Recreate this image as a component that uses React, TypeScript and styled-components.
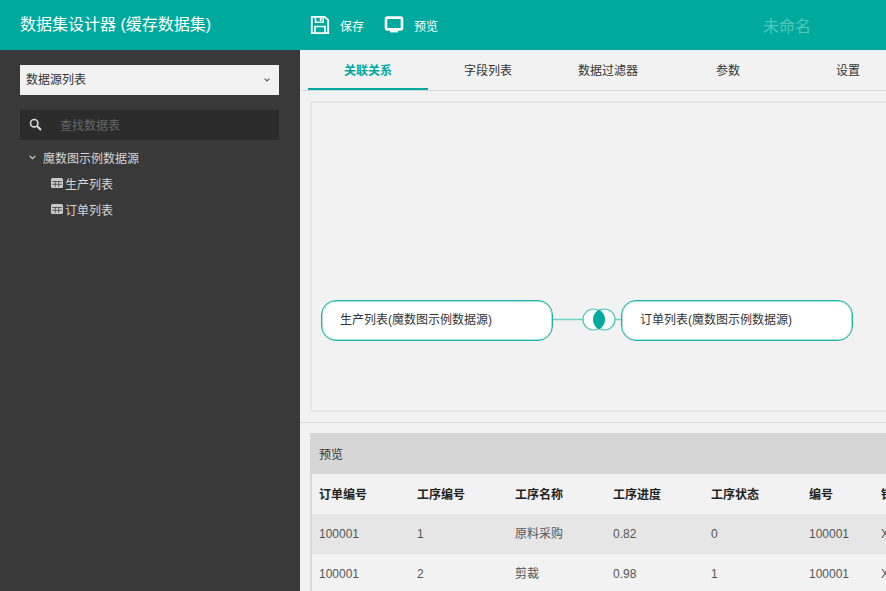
import React from "react";
import styled, { createGlobalStyle } from "styled-components";

const FONT = `"Liberation Sans", "Noto Sans CJK SC", sans-serif`;
const TEAL = "#00a99d";

const Global = createGlobalStyle`
  html, body { margin: 0; padding: 0; height: 100%; overflow: hidden; }
  body { font-family: ${FONT}; font-size: 12px; background: #f2f2f2; }
  * { box-sizing: border-box; }
`;

const Page = styled.div`
  width: 886px; height: 591px; overflow: hidden;
  display: flex; flex-direction: column;
`;
const Header = styled.header`
  height: 50px; flex: none; background: ${TEAL};
  display: flex; align-items: center; color: #fff;
`;
const Title = styled.h1`
  width: 300px; flex: none; margin: 0; padding-left: 20px;
  font-size: 16px; font-weight: 400; line-height: 50px; white-space: nowrap;
`;
const Action = styled.button`
  display: flex; align-items: center; gap: 10px; padding: 0; border: 0; background: none;
  color: #fff; font: 12px ${FONT};
  margin-left: ${(p: { $ml: number }) => p.$ml}px;
`;
const DocName = styled.div`
  margin-left: 325px; font-size: 16px; color: #4fc9c0; white-space: nowrap;
`;
const Body = styled.div`
  flex: 1; min-height: 0; display: flex;
`;
const Sidebar = styled.aside`
  width: 300px; flex: none; background: #393939; padding: 15px 21px 0 20px;
`;
const Select = styled.div`
  height: 30px; background: #f2f2f2; color: #333; padding: 0 9px 0 6px;
  display: flex; align-items: center; justify-content: space-between;
  line-height: 30px;
`;
const SearchBox = styled.div`
  height: 30px; margin-top: 15px; background: #2b2b2b; color: #666;
  display: flex; align-items: center; padding: 0 0 1px 9px; gap: 18px;
`;
const Tree = styled.div`
  margin-top: 4px; color: #d6d6d6;
`;
const TreeRoot = styled.div`
  height: 26px; display: flex; align-items: center; padding-left: 9px; gap: 7px;
`;
const TreeLeaf = styled.div`
  height: 26px; display: flex; align-items: center; padding-left: 31px; gap: 2px;
`;
const Main = styled.main`
  flex: 1; min-width: 0; overflow: hidden; background: #f2f2f2;
`;
const Tabs = styled.nav`
  height: 41px; margin-left: 0; padding-left: 8px;
  display: flex; border-bottom: 1px solid #d9d9d9;
`;
const Tab = styled.div<{ $active?: boolean }>`
  width: 120px; flex: none; height: 40px; line-height: 42px; text-align: center;
  color: ${(p) => (p.$active ? TEAL : "#333")};
  font-weight: ${(p) => (p.$active ? 700 : 400)};
  border-bottom: 2px solid ${(p) => (p.$active ? TEAL : "transparent")};
`;
const Canvas = styled.section`
  position: relative; width: 600px; height: 311px; margin: 10px 0 0 10px;
  border: 2px solid #e6e6e6; border-right: 0;
`;
const Node = styled.div<{ $left: number }>`
  position: absolute; left: ${(p) => p.$left}px; top: 197px;
  width: 232px; height: 41px; padding-left: 18px;
  background: #fff; border: 1px solid #1fb1a6; border-radius: 15px;
  box-shadow: inset 0 0 0 1px #a8e2dc;
  color: #333; line-height: 39px; white-space: nowrap;
`;
const Joint = styled.svg`
  position: absolute; left: 241px; top: 197px;
`;
const Divider = styled.hr`
  margin: 10px 0 0; border: 0; border-top: 1px solid #d9d9d9;
`;
const Preview = styled.section`
  width: 600px; margin: 10px 0 0 10px; border-left: 2px solid #d9d9d9;
`;
const PreviewHead = styled.div`
  height: 41px; margin-left: -2px; padding-left: 9px; background: #d6d6d6; color: #333;
  line-height: 44px;
`;
const Row = styled.div<{ $shade?: boolean; $head?: boolean }>`
  height: 40px; display: flex; padding-left: 7px; align-items: center; white-space: nowrap;
  padding-top: ${(p) => (p.$head ? 2 : 0)}px;
  background: ${(p) => (p.$shade ? "#e6e6e6" : "transparent")};
  color: ${(p) => (p.$head ? "#222" : "#555")};
  font-weight: ${(p) => (p.$head ? 700 : 400)};
`;
const Cell = styled.div`
  width: 98px; flex: none; line-height: 16px;
  &:nth-child(6) { width: 72px; }
`;

const SelectChevron = () => (
  <svg width="6" height="4" viewBox="0 0 6 4">
    <path d="M.6 .6 L3 3 L5.4 .6" fill="none" stroke="#555" strokeWidth="1.1" />
  </svg>
);
const TreeChevron = () => (
  <svg width="7" height="5" viewBox="0 0 7 5">
    <path d="M.7 .8 L3.5 3.6 L6.3 .8" fill="none" stroke="#d0d0d0" strokeWidth="1.2" />
  </svg>
);
const SearchIcon = () => (
  <svg width="13" height="13" viewBox="0 0 13 13">
    <circle cx="5.2" cy="5.2" r="3.7" fill="none" stroke="#d8d8d8" strokeWidth="1.6" />
    <path d="M8 8 L12 12" stroke="#d8d8d8" strokeWidth="2.1" />
  </svg>
);
const TableIcon = () => (
  <svg width="12" height="10" viewBox="0 0 12 10">
    <rect x="0" y="0" width="12" height="10" rx="1.5" fill="#c9c9c9" />
    <path d="M1 3.5H11M1 6.3H11M4.3 3V9M7.7 3V9" stroke="#444" strokeWidth=".8" />
  </svg>
);
const SaveIcon = () => (
  <svg width="20" height="20" viewBox="0 0 20 20" fill="none" stroke="#fff">
    <path d="M1.8 1.8 H14.6 L18.2 5.2 V18.2 H1.8 Z" strokeWidth="1.8" />
    <path d="M5.5 2 V7.2 H13.2 V2" strokeWidth="1.6" />
    <path d="M10.7 3 V6" strokeWidth="1.8" />
    <path d="M5 18 V11.5 H15 V18" strokeWidth="1.6" />
  </svg>
);
const ScreenIcon = () => (
  <svg width="20" height="18" viewBox="0 0 20 18" fill="none" stroke="#fff">
    <rect x="2" y="1.6" width="16" height="11.8" rx="1.4" strokeWidth="2.6" />
    <path d="M6 15.4 H14" strokeWidth="2" />
  </svg>
);

const columns = ["订单编号", "工序编号", "工序名称", "工序进度", "工序状态", "编号", "销售"];
const rows = [
  ["100001", "1", "原料采购", "0.82", "0", "100001", "XS"],
  ["100001", "2", "剪裁", "0.98", "1", "100001", "XS"],
];

export default function App() {
  return (
    <Page>
      <Global />
      <Header>
        <Title>数据集设计器 (缓存数据集)</Title>
        <Action $ml={10}><SaveIcon />保存</Action>
        <Action $ml={20}><ScreenIcon />预览</Action>
        <DocName>未命名</DocName>
      </Header>
      <Body>
        <Sidebar>
          <Select>数据源列表<SelectChevron /></Select>
          <SearchBox><SearchIcon />查找数据表</SearchBox>
          <Tree>
            <TreeRoot><TreeChevron />魔数图示例数据源</TreeRoot>
            <TreeLeaf><TableIcon />生产列表</TreeLeaf>
            <TreeLeaf><TableIcon />订单列表</TreeLeaf>
          </Tree>
        </Sidebar>
        <Main>
          <Tabs>
            <Tab $active>关联关系</Tab>
            <Tab>字段列表</Tab>
            <Tab>数据过滤器</Tab>
            <Tab>参数</Tab>
            <Tab>设置</Tab>
          </Tabs>
          <Canvas>
            <Node $left={9}>生产列表(魔数图示例数据源)</Node>
            <Joint width="70" height="41" viewBox="0 0 70 41">
              <path d="M0 19.5H30M62 19.5H69" stroke="#6fd0c8" strokeWidth="1.5" />
              <circle cx="40.5" cy="19.5" r="10.5" fill="#fff" stroke="#4fc4bb" strokeWidth="1.2" />
              <circle cx="51.5" cy="19.5" r="10.5" fill="#fff" fillOpacity=".6" stroke="#4fc4bb" strokeWidth="1.2" />
              <path d="M46 9.5 C 38 14, 38 25, 46 29.5 C 54 25, 54 14, 46 9.5 Z" fill="#00a99d" />
            </Joint>
            <Node $left={309}>订单列表(魔数图示例数据源)</Node>
          </Canvas>
          <Divider />
          <Preview>
            <PreviewHead>预览</PreviewHead>
            <Row $head>{columns.map((c) => <Cell key={c}>{c}</Cell>)}</Row>
            {rows.map((r, i) => (
              <Row key={i} $shade={i === 0}>{r.map((c, j) => <Cell key={j}>{c}</Cell>)}</Row>
            ))}
          </Preview>
        </Main>
      </Body>
    </Page>
  );
}
